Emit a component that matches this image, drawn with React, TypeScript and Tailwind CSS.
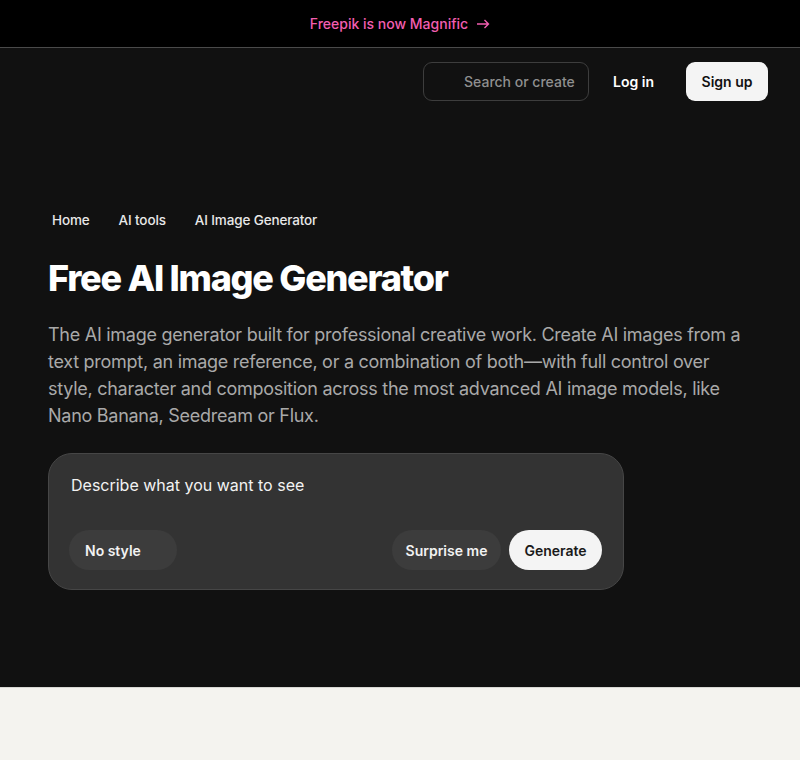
import React from "react";

export default function App() {
  return (
    <div className="min-h-[760px] bg-[#f4f3ef] font-['Inter',sans-serif]">
      <div className="flex h-[48px] items-center justify-center border-b border-[#4a4a4a] bg-black">
        <span className="flex items-center gap-[8px] text-[14px] font-medium text-[#f25eb0]">
          Freepik is now Magnific
          <svg width="14" height="10" viewBox="0 0 14 10" fill="none" stroke="currentColor" strokeWidth="1.4">
            <path d="M1 5h11.5M8.5 1l4 4-4 4" />
          </svg>
        </span>
      </div>
      <div className="bg-[#111111] pb-[97px]">
        <header className="flex h-[63px] items-start justify-end px-[32px] pt-[14px]">
          <div className="flex h-[39px] w-[166px] items-center rounded-[9px] border border-[#3d3d3d] pl-[40px] text-[14px] font-medium text-[#8f8f8f]">
            Search or create
          </div>
          <button className="ml-[12px] flex h-[39px] items-center px-[12px] text-[14px] font-semibold text-white">Log in</button>
          <button className="ml-[20px] flex h-[39px] w-[82px] items-center justify-center rounded-[9px] bg-[#f4f4f4] text-[14px] font-semibold text-[#111]">
            Sign up
          </button>
        </header>
        <div className="px-[48px] pt-[99px]">
          <nav className="flex gap-[29px] pl-[4px] text-[13.5px] font-medium tracking-[-0.01em] text-[#e8e8e8]">
            <span>Home</span>
            <span>AI tools</span>
            <span>AI Image Generator</span>
          </nav>
          <h1 className="mt-[26px] text-[36px] font-extrabold leading-[44px] tracking-[-0.035em] text-white">
            Free AI Image Generator
          </h1>
          <p className="mt-[21px] max-w-[700px] text-[18px] leading-[27px] tracking-[-0.015em] text-[#a9a9a9]">
            The AI image generator built for professional creative work. Create AI images from a text prompt, an image reference, or a combination of both—with full control over style, character and composition across the most advanced AI image models, like Nano Banana, Seedream or Flux.
          </p>
          <div className="mt-[24px] w-[576px] rounded-[24px] border border-[#464646] bg-[#333333] px-[20px] pb-[19px] pt-[19px]">
            <div className="pl-[2px] text-[16px] text-[#f2f2f2]">Describe what you want to see</div>
            <div className="mt-[33px] flex items-center">
              <button className="flex h-[40px] w-[108px] items-center rounded-full bg-[#3c3c3c] pl-[16px] text-[14px] font-semibold text-[#f2f2f2]">
                No style
              </button>
              <div className="flex-1" />
              <button className="flex h-[40px] w-[109px] items-center justify-center rounded-full bg-[#3c3c3c] text-[14px] font-semibold text-[#f2f2f2]">
                Surprise me
              </button>
              <button className="ml-[8px] mr-[1px] flex h-[40px] w-[93px] items-center justify-center rounded-full bg-[#f4f4f4] text-[14px] font-semibold text-[#1a1a1a]">
                Generate
              </button>
            </div>
          </div>
        </div>
      </div>
      <div className="border-t border-[#d8d8d4] bg-[#f4f3ef]" />
    </div>
  );
}
